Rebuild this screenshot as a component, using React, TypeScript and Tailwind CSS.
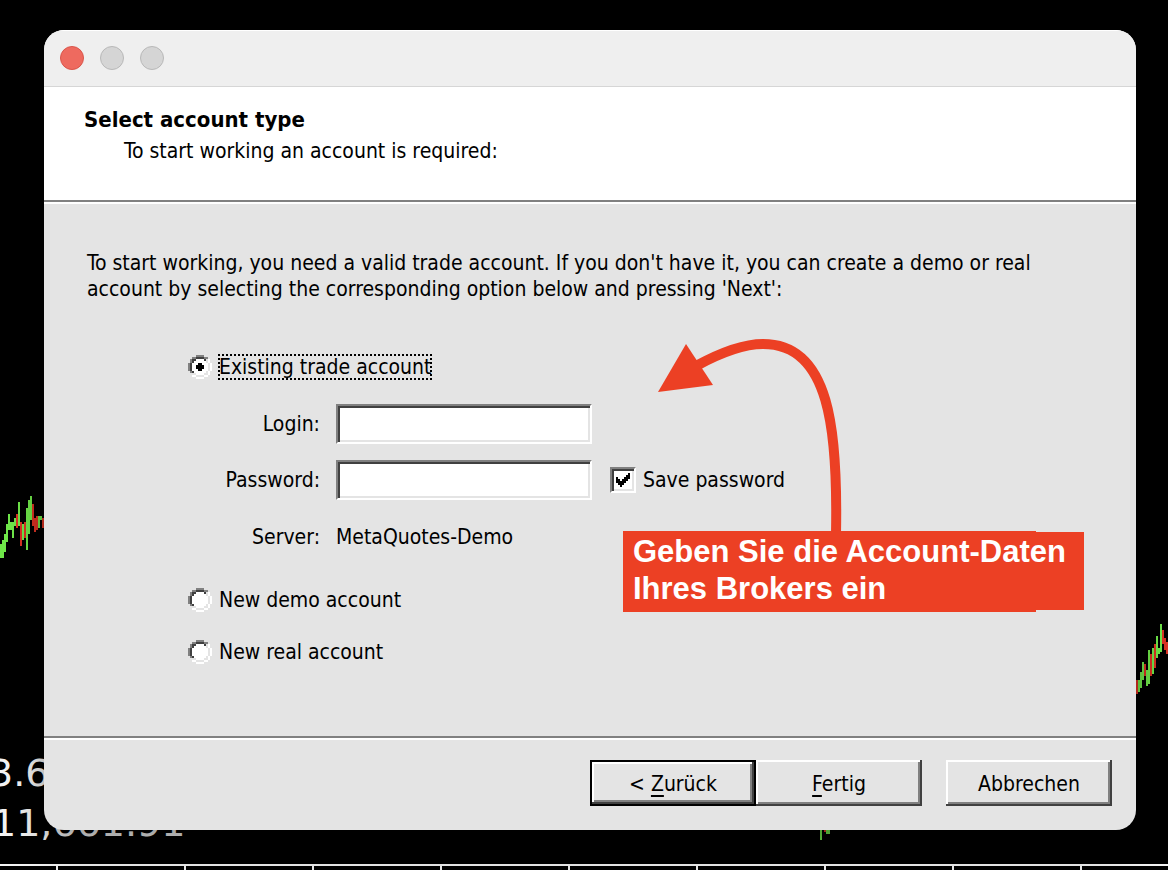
import { useState } from "react";
import type { ReactNode } from "react";

type Candle = [x: number, y: number, w: number, h: number, tone: "up" | "down"];

const LEFT_CANDLES: Candle[] = [
  [0, 544, 2, 14, "up"],
  [2, 540, 2, 18, "up"],
  [4, 534, 2, 18, "up"],
  [6, 524, 2, 18, "up"],
  [8, 514, 2, 16, "up"],
  [10, 522, 2, 8, "up"],
  [12, 522, 2, 16, "up"],
  [14, 518, 2, 8, "up"],
  [16, 514, 2, 14, "down"],
  [18, 502, 2, 24, "up"],
  [20, 522, 2, 24, "down"],
  [22, 524, 2, 16, "up"],
  [24, 522, 2, 16, "down"],
  [26, 508, 2, 42, "up"],
  [28, 500, 2, 34, "up"],
  [30, 496, 2, 24, "up"],
  [32, 504, 2, 22, "down"],
  [34, 518, 2, 14, "down"],
  [36, 516, 2, 14, "down"],
  [38, 516, 2, 12, "up"],
  [40, 516, 2, 4, "up"],
  [42, 518, 2, 10, "down"],
];

const RIGHT_CANDLES: Candle[] = [
  [1136, 680, 2, 14, "down"],
  [1138, 680, 2, 12, "up"],
  [1140, 672, 2, 16, "up"],
  [1142, 662, 2, 18, "up"],
  [1144, 664, 2, 12, "down"],
  [1146, 670, 2, 16, "up"],
  [1148, 650, 2, 34, "up"],
  [1150, 654, 2, 22, "down"],
  [1152, 648, 2, 26, "up"],
  [1154, 644, 2, 24, "down"],
  [1156, 636, 2, 22, "up"],
  [1158, 648, 2, 6, "up"],
  [1160, 624, 2, 28, "up"],
  [1162, 630, 2, 14, "down"],
  [1164, 638, 2, 12, "down"],
  [1166, 642, 2, 12, "down"],
];

const BOTTOM_CANDLES: Candle[] = [
  [820, 826, 2, 14, "up"],
  [824, 828, 2, 4, "down"],
  [826, 828, 4, 6, "up"],
];

const TICKS = [56, 184, 312, 440, 568, 696, 824, 952, 1080];

function Chart() {
  return (
    <div
      className="absolute inset-0 overflow-hidden font-['DejaVu_Sans',sans-serif] text-[38px] leading-[46px] text-[#f4f4f4]"
      aria-hidden="true"
    >
      <svg className="absolute left-0 top-0" width="1168" height="870" shapeRendering="crispEdges">
        {[...LEFT_CANDLES, ...RIGHT_CANDLES, ...BOTTOM_CANDLES].map(([x, y, w, h, tone]) => (
          <rect key={x} x={x} y={y} width={w} height={h} fill={tone === "up" ? "#70e84a" : "#dc3324"} />
        ))}
        <rect x="0" y="864" width="1168" height="2" fill="#f4f4f4" />
        {TICKS.map((x) => (
          <rect key={x} x={x} y="866" width="2" height="4" fill="#f4f4f4" />
        ))}
      </svg>
      <span className="absolute left-[-11px] top-[750px]">3.6</span>
      <span className="absolute left-[-8px] top-[800px]">11,661.91</span>
    </div>
  );
}

function RadioFace({ checked }: { checked: boolean }) {
  return (
    <svg className="col-start-1 row-start-1" width="24" height="24" viewBox="0 0 12 12" shapeRendering="crispEdges">
      <path fill="#fff" d="M4 2h4v1h1v1h1v4h-1v1h-1v1h-4v-1h-1v-1h-1v-4h1v-1h1z" />
      <path fill="#808080" d="M4 0h4v1h-4zM2 1h2v1h-2zM8 1h2v1h-2zM1 2h1v2h-1zM0 4h1v4h-1zM1 8h1v1h-1z" />
      <path fill="#404040" d="M4 1h4v1h-4zM2 2h2v1h-2zM8 2h1v1h-1zM2 3h1v1h-1zM1 4h1v4h-1zM2 8h1v1h-1z" />
      <path fill="#e4e4e4" d="M9 3h1v1h-1zM10 4h1v4h-1zM9 8h1v1h-1zM2 9h2v1h-2zM8 9h2v1h-2zM4 10h4v1h-4z" />
      <path
        fill="#fff"
        d="M10 2h1v2h-1zM11 4h1v4h-1zM10 8h1v2h-1zM2 10h2v1h-2zM8 10h2v1h-2zM4 11h4v1h-4z"
      />
      {checked && <path fill="#000" d="M5 4h2v1h1v2h-1v1h-2v-1h-1v-2h1z" />}
    </svg>
  );
}

function Radio({ label, checked, onSelect }: { label: string; checked: boolean; onSelect: () => void }) {
  return (
    <label className="flex h-[26px] w-fit items-center gap-1.5">
      <span className="grid">
        <RadioFace checked={checked} />
        <input
          type="radio"
          name="account"
          checked={checked}
          onChange={onSelect}
          className="col-start-1 row-start-1 size-6 appearance-none outline-none"
        />
      </span>
      <span className={`px-px ${checked ? "outline-2 -outline-offset-2 outline-dotted outline-black" : ""}`}>
        {label}
      </span>
    </label>
  );
}

const FIELD =
  "h-10 w-64 border-2 border-t-[#808080] border-l-[#808080] border-r-white border-b-white bg-white px-2 outline-none [box-shadow:inset_2px_2px_#404040,inset_-2px_-2px_#e4e4e4]";

const BUTTON = "h-[46px] w-[166px] pt-0.5 text-center outline-none";
const RAISED =
  "[box-shadow:inset_-2px_-2px_#404040,inset_2px_2px_#fff,inset_-4px_-4px_#808080]";
const RAISED_DEFAULT =
  "border-2 border-black [box-shadow:inset_-2px_-2px_#404040,inset_2px_2px_#fff,inset_-4px_-4px_#808080]";

function Divider() {
  return <div className="h-1 border-t-2 border-[#808080] bg-white" />;
}

function Key({ children }: { children: ReactNode }) {
  return <span className="underline decoration-2 underline-offset-4">{children}</span>;
}

function Annotation() {
  return (
    <>
      <svg
        className="pointer-events-none absolute left-[606px] top-[300px]"
        width="200"
        height="204"
        viewBox="650 330 200 204"
        aria-hidden="true"
      >
        <path d="M836 534C838 430 830 344 763 344C742 344 718 354 696 366" fill="none" stroke="#ec4024" strokeWidth="10" />
        <path d="M658 392L686 344L713 385Z" fill="#ec4024" />
      </svg>
      <div className="absolute left-[579px] top-[501px] flex items-start font-['Liberation_Sans',Arial,sans-serif] text-[31px] font-bold leading-[37px] text-white">
        <div className="h-[81px] w-[413px] bg-[#ec4024]" />
        <div className="mt-px h-[78px] w-12 bg-[#ec4024]" />
        <p className="absolute left-[10px] top-[2px] whitespace-nowrap">
          Geben Sie die Account-Daten
          <br />
          Ihres Brokers ein
        </p>
      </div>
    </>
  );
}

export default function App() {
  const [account, setAccount] = useState("existing");
  const [save, setSave] = useState(true);

  return (
    <div className="relative min-h-screen overflow-hidden bg-black pb-10 pl-11 pr-8 pt-[30px] font-['DejaVu_Sans_Condensed','DejaVu_Sans',sans-serif] text-[21px] leading-[26px] text-black">
      <Chart />
      <main className="relative overflow-hidden rounded-[20px] bg-[#e4e4e4] shadow-[0_16px_40px_rgba(0,0,0,0.4)]">
        <div className="flex h-[57px] items-center gap-4 border-b border-[#d6d6d6] bg-[#efefef] px-4 shadow-[inset_0_1px_#fff]">
          <button aria-label="Close" className="size-6 rounded-full border border-[#d9564b] bg-[#ee6a5f]" />
          <button aria-label="Minimize" className="size-6 rounded-full border border-[#b8b8b8] bg-[#d5d5d5]" />
          <button aria-label="Zoom" className="size-6 rounded-full border border-[#b8b8b8] bg-[#d5d5d5]" />
        </div>
        <header className="h-[113px] bg-white pl-10 pt-5">
          <h1 className="text-[22px] font-bold leading-[26px]">Select account type</h1>
          <p className="mt-[5px] pl-10">To start working an account is required:</p>
        </header>
        <Divider />
        <form className="pb-[71px] pl-36 pt-[46px]" onSubmit={(e) => e.preventDefault()}>
          <p className="-ml-[101px] max-w-[1000px]">
            To start working, you need a valid trade account. If you don't have it, you can create a demo or real
            account by selecting the corresponding option below and pressing 'Next':
          </p>
          <div className="mt-[52px]">
            <Radio
              label="Existing trade account"
              checked={account === "existing"}
              onSelect={() => setAccount("existing")}
            />
          </div>
          <div className="mt-6 grid w-fit grid-cols-[132px_256px_auto] items-center gap-x-4 gap-y-4">
            <label htmlFor="login" className="text-right">
              Login:
            </label>
            <input id="login" type="text" className={FIELD} />
            <span />
            <label htmlFor="password" className="text-right">
              Password:
            </label>
            <input id="password" type="password" className={FIELD} />
            <label className="ml-[2px] flex items-center gap-1.5">
              <span className="grid">
                <input
                  type="checkbox"
                  checked={save}
                  onChange={(e) => setSave(e.target.checked)}
                  className="col-start-1 row-start-1 size-[26px] appearance-none border-2 border-b-white border-l-[#808080] border-r-white border-t-[#808080] bg-white outline-none [box-shadow:inset_2px_2px_#404040,inset_-2px_-2px_#e4e4e4]"
                />
                {save && (
                  <svg
                    className="pointer-events-none col-start-1 row-start-1"
                    width="26"
                    height="26"
                    viewBox="0 0 13 13"
                    shapeRendering="crispEdges"
                  >
                    <path d="M3 5h1v1h1v1h1v-1h1v-1h1v-1h1v-1h1v3h-1v1h-1v1h-1v1h-1v1h-1v-1h-1v-1h-1z" />
                  </svg>
                )}
              </span>
              <span className="px-px">Save password</span>
            </label>
          </div>
          <dl className="mt-6 grid w-fit grid-cols-[132px_auto] gap-x-4">
            <dt className="text-right">Server:</dt>
            <dd>MetaQuotes-Demo</dd>
          </dl>
          <div className="mt-[37px] grid gap-[26px]">
            <Radio label="New demo account" checked={account === "demo"} onSelect={() => setAccount("demo")} />
            <Radio label="New real account" checked={account === "real"} onSelect={() => setAccount("real")} />
          </div>
        </form>
        <Divider />
        <footer className="flex justify-end px-6 pb-6 pt-5">
          <button type="button" className={`${BUTTON} ${RAISED_DEFAULT}`}>
            &lt; <Key>Z</Key>urück
          </button>
          <button type="button" className={`${BUTTON} ${RAISED}`}>
            <Key>F</Key>ertig
          </button>
          <button type="button" className={`${BUTTON} ${RAISED} ml-6`}>
            Abbrechen
          </button>
        </footer>
        <Annotation />
      </main>
    </div>
  );
}
